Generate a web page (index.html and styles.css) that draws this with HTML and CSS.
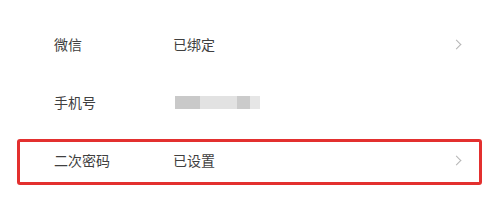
FILE: index.html
```html
<!DOCTYPE html>
<html lang="zh-CN">
<head>
    <meta charset="UTF-8">
    <meta name="viewport" content="width=device-width, initial-scale=1.0">
    <title>账号绑定</title>
    <link rel="stylesheet" href="styles.css">
</head>
<body>
    <div class="list">
        <div class="row">
            <span class="label">微信</span>
            <span class="value">已绑定</span>
            <span class="arrow"></span>
        </div>
        <div class="row">
            <span class="label">手机号</span>
            <span class="value">
                <span class="masked">
                    <i class="m1"></i><i class="m2"></i><i class="m3"></i><i class="m4"></i>
                </span>
            </span>
        </div>
        <div class="row marked">
            <span class="label">二次密码</span>
            <span class="value">已设置</span>
            <span class="arrow"></span>
        </div>
    </div>
</body>
</html>
```

FILE: styles.css
```css
body {
    margin: 0;
    background-color: #ffffff;
    font-family: "Noto Sans CJK SC", "Noto Sans", sans-serif;
    color: #404040;
}

.list {
    padding-top: 15px;
}

.row {
    position: relative;
    display: flex;
    align-items: center;
    height: 58px;
    padding: 0 40px 0 54px;
    font-size: 14px;
}

.label {
    width: 119px;
    flex-shrink: 0;
}

.value {
    flex: 1;
}

.arrow {
    width: 6px;
    height: 6px;
    border-top: 1.5px solid #b5b5b5;
    border-right: 1.5px solid #b5b5b5;
    transform: rotate(45deg);
}

.masked {
    display: flex;
    width: 85px;
    height: 13px;
    margin-left: 2px;
    filter: blur(0.6px);
}

.masked i {
    display: block;
    height: 100%;
}

.m1 { width: 25px; background-color: #c9c9c9; }
.m2 { width: 37px; background-color: #e2e2e2; }
.m3 { width: 13px; background-color: #cbcbcb; }
.m4 { width: 10px; background-color: #e6e6e6; }

.marked::after {
    content: "";
    position: absolute;
    left: 17px;
    right: 18px;
    top: 8px;
    bottom: 4px;
    border: 3px solid #e3302f;
    border-radius: 3px;
}
```
